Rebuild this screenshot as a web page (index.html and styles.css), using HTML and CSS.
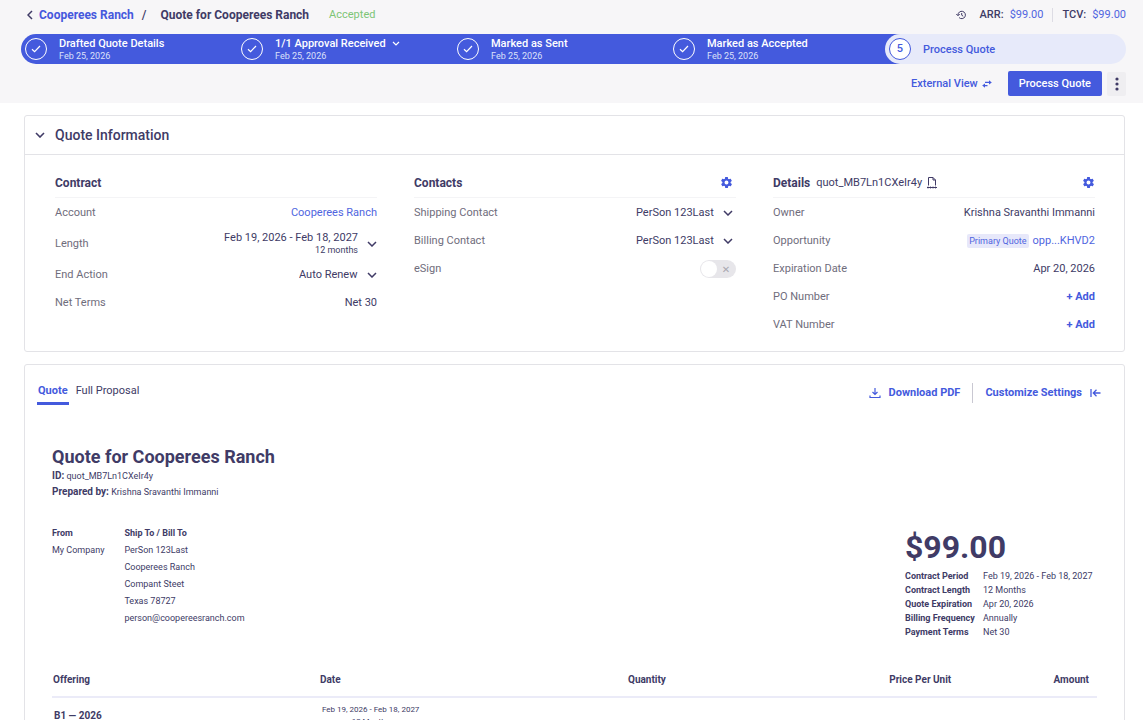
FILE: index.html
```html
<!DOCTYPE html>
<html lang="en">
<head>
    <meta charset="UTF-8">
    <meta name="viewport" content="width=device-width, initial-scale=1.0">
    <title>Quote for Cooperees Ranch</title>
    <link rel="stylesheet" href="styles.css">
</head>
<body>
    <header class="page-header">
        <div class="title-row">
            <nav class="breadcrumb">
                <svg class="back-icon" width="6" height="10" viewBox="0 0 6 10" fill="none" stroke="currentColor" stroke-width="1.5"><path d="M5 1 1 5l4 4"/></svg>
                <a href="#">Cooperees Ranch</a>
                <span class="slash">/</span>
                <h1>Quote for Cooperees Ranch</h1>
                <span class="quote-status">Accepted</span>
            </nav>
            <div class="totals">
                <svg class="history-icon" width="10" height="10" viewBox="0 0 10 10" fill="none" stroke="currentColor"><path d="M2 5a3.7 3.7 0 1 1 1.1 2.6M.3 4 2 5.8 3.7 4M5.7 3v2.2l1.5 1"/></svg>
                <span class="total"><b>ARR:</b> <a href="#">$99.00</a></span>
                <span class="total"><b>TCV:</b> <a href="#">$99.00</a></span>
            </div>
        </div>

        <div class="stepper">
            <div class="steps-done">
                <div class="step">
                    <span class="step-circle"><svg width="10" height="8" viewBox="0 0 10 8" fill="none" stroke="currentColor" stroke-width="1.2"><path d="m1 4.2 2.6 2.5L9 1"/></svg></span>
                    <div>
                        <p class="step-name">Drafted Quote Details</p>
                        <p class="step-date">Feb 25, 2026</p>
                    </div>
                </div>
                <div class="step">
                    <span class="step-circle"><svg width="10" height="8" viewBox="0 0 10 8" fill="none" stroke="currentColor" stroke-width="1.2"><path d="m1 4.2 2.6 2.5L9 1"/></svg></span>
                    <div>
                        <p class="step-name">1/1 Approval Received
                            <svg class="step-arrow" width="8" height="5" viewBox="0 0 8 5" fill="none" stroke="currentColor" stroke-width="1.2"><path d="m1 1 3 3 3-3"/></svg>
                        </p>
                        <p class="step-date">Feb 25, 2026</p>
                    </div>
                </div>
                <div class="step">
                    <span class="step-circle"><svg width="10" height="8" viewBox="0 0 10 8" fill="none" stroke="currentColor" stroke-width="1.2"><path d="m1 4.2 2.6 2.5L9 1"/></svg></span>
                    <div>
                        <p class="step-name">Marked as Sent</p>
                        <p class="step-date">Feb 25, 2026</p>
                    </div>
                </div>
                <div class="step">
                    <span class="step-circle"><svg width="10" height="8" viewBox="0 0 10 8" fill="none" stroke="currentColor" stroke-width="1.2"><path d="m1 4.2 2.6 2.5L9 1"/></svg></span>
                    <div>
                        <p class="step-name">Marked as Accepted</p>
                        <p class="step-date">Feb 25, 2026</p>
                    </div>
                </div>
            </div>
            <div class="step step-current">
                <span class="step-circle">5</span>
                <p class="step-name">Process Quote</p>
            </div>
        </div>

        <div class="actions">
            <button class="link-btn external-btn">External View
                <svg width="10" height="8" viewBox="0 0 10 8" fill="currentColor"><path d="M3 1.8h4V.2L9.8 2.4 7 4.6V3H3zM7 6.2H3v1.6L.2 5.6 3 3.4V5h2.5v1.2z"/></svg>
            </button>
            <button class="btn">Process Quote</button>
            <button class="more-btn" aria-label="More actions">
                <svg width="4" height="14" viewBox="0 0 4 14" fill="currentColor"><circle cx="2" cy="2" r="1.6"/><circle cx="2" cy="7" r="1.6"/><circle cx="2" cy="12" r="1.6"/></svg>
            </button>
        </div>
    </header>

    <main>
        <section class="card">
            <div class="card-header">
                <button class="icon-btn" aria-label="Collapse">
                    <svg width="10" height="6" viewBox="0 0 10 6" fill="none" stroke="currentColor" stroke-width="1.6"><path d="m1 1 4 4 4-4"/></svg>
                </button>
                <h2>Quote Information</h2>
            </div>
            <div class="info-grid">
                <div class="info-col">
                    <div class="info-title"><h3>Contract</h3></div>
                    <div class="info-row">
                        <span class="info-label">Account</span>
                        <a href="#">Cooperees Ranch</a>
                    </div>
                    <div class="info-row tall">
                        <span class="info-label">Length</span>
                        <button class="length-btn">
                            <span>Feb 19, 2026 - Feb 18, 2027<small>12 months</small></span>
                            <svg width="10" height="6" viewBox="0 0 10 6" fill="none" stroke="currentColor" stroke-width="1.5"><path d="m1 1 4 4 4-4"/></svg>
                        </button>
                    </div>
                    <div class="info-row">
                        <label class="info-label" for="endAction">End Action</label>
                        <div class="select-box">
                            <select id="endAction"><option>Auto Renew</option></select>
                            <svg width="10" height="6" viewBox="0 0 10 6" fill="none" stroke="currentColor" stroke-width="1.5"><path d="m1 1 4 4 4-4"/></svg>
                        </div>
                    </div>
                    <div class="info-row">
                        <span class="info-label">Net Terms</span>
                        <span>Net 30</span>
                    </div>
                </div>

                <div class="info-col">
                    <div class="info-title">
                        <h3>Contacts</h3>
                        <button class="icon-btn gear-btn contacts-gear" aria-label="Contact settings">
                            <svg width="11" height="11" viewBox="2 2 20 20" fill="currentColor"><path d="M19.4 13a7.5 7.5 0 0 0 0-2l2.1-1.6c.2-.2.2-.4.1-.6l-2-3.5c-.1-.2-.4-.3-.6-.2l-2.5 1a7.3 7.3 0 0 0-1.7-1L14.5 2.400c0-.2-.3-.4-.5-.4h-4c-.3 0-.5.2-.5.4l-.4 2.700c-.6.2-1.200.6-1.700 1l-2.500-1c-.2-.1-.5 0-.6.2l-2 3.500c-.1.2-.1.5.1.6L4.600 11a7.500 7.500 0 0 0 0 2l-2.100 1.600c-.2.2-.2.4-.1.6l2 3.500c.1.2.4.3.6.2l2.500-1c.5.4 1.100.7 1.700 1l.4 2.700c0 .2.2.4.5.4h4c.2 0 .5-.2.5-.4l.4-2.700c.6-.3 1.200-.6 1.700-1l2.500 1c.2.1.5 0 .6-.2l2-3.500c.1-.2.1-.5-.1-.6zM12 15.600a3.600 3.600 0 1 1 0-7.200 3.600 3.600 0 0 1 0 7.200z"/></svg>
                        </button>
                    </div>
                    <div class="info-row">
                        <label class="info-label" for="shipping">Shipping Contact</label>
                        <div class="select-box inset">
                            <select id="shipping"><option>PerSon 123Last</option></select>
                            <svg width="10" height="6" viewBox="0 0 10 6" fill="none" stroke="currentColor" stroke-width="1.5"><path d="m1 1 4 4 4-4"/></svg>
                        </div>
                    </div>
                    <div class="info-row">
                        <label class="info-label" for="billing">Billing Contact</label>
                        <div class="select-box inset">
                            <select id="billing"><option>PerSon 123Last</option></select>
                            <svg width="10" height="6" viewBox="0 0 10 6" fill="none" stroke="currentColor" stroke-width="1.5"><path d="m1 1 4 4 4-4"/></svg>
                        </div>
                    </div>
                    <div class="info-row">
                        <label class="info-label" for="esign">eSign</label>
                        <input type="checkbox" class="toggle" id="esign">
                    </div>
                </div>

                <div class="info-col">
                    <div class="info-title">
                        <h3>Details</h3>
                        <span class="quote-id">quot_MB7Ln1CXeIr4y</span>
                        <svg class="file-icon" width="10" height="12" viewBox="0 0 10 12" fill="none" stroke="currentColor"><path d="M1.5 8.500v-8h4.500l2.500 2.500v5.500M6 .5v2.500h2.500M0 10.500h10"/><path d="M1 9.500v2M3.500 9.500v2M6 9.500v2M8.500 9.500v2" stroke-width=".8"/></svg>
                        <button class="icon-btn gear-btn" aria-label="Detail settings">
                            <svg width="11" height="11" viewBox="2 2 20 20" fill="currentColor"><path d="M19.4 13a7.5 7.5 0 0 0 0-2l2.1-1.6c.2-.2.2-.4.1-.6l-2-3.5c-.1-.2-.4-.3-.6-.2l-2.5 1a7.3 7.3 0 0 0-1.7-1L14.5 2.400c0-.2-.3-.4-.5-.4h-4c-.3 0-.5.2-.5.4l-.4 2.700c-.6.2-1.200.6-1.700 1l-2.500-1c-.2-.1-.5 0-.6.2l-2 3.500c-.1.2-.1.5.1.6L4.600 11a7.500 7.500 0 0 0 0 2l-2.100 1.600c-.2.2-.2.4-.1.6l2 3.500c.1.2.4.3.6.2l2.500-1c.5.4 1.100.7 1.700 1l.4 2.700c0 .2.2.4.5.4h4c.2 0 .5-.2.5-.4l.4-2.700c.6-.3 1.200-.6 1.700-1l2.500 1c.2.1.5 0 .6-.2l2-3.500c.1-.2.1-.5-.1-.6zM12 15.600a3.600 3.600 0 1 1 0-7.200 3.600 3.600 0 0 1 0 7.200z"/></svg>
                        </button>
                    </div>
                    <div class="info-row">
                        <span class="info-label">Owner</span>
                        <span>Krishna Sravanthi Immanni</span>
                    </div>
                    <div class="info-row">
                        <span class="info-label">Opportunity</span>
                        <span class="opportunity"><span class="tag">Primary Quote</span><a href="#">opp...KHVD2</a></span>
                    </div>
                    <div class="info-row">
                        <span class="info-label">Expiration Date</span>
                        <span>Apr 20, 2026</span>
                    </div>
                    <div class="info-row">
                        <span class="info-label">PO Number</span>
                        <button class="link-btn">+ Add</button>
                    </div>
                    <div class="info-row">
                        <span class="info-label">VAT Number</span>
                        <button class="link-btn">+ Add</button>
                    </div>
                </div>
            </div>
        </section>

        <section class="card">
            <div class="toolbar">
                <div class="tabs" role="tablist">
                    <button class="tab active" role="tab" aria-selected="true">Quote</button>
                    <button class="tab" role="tab">Full Proposal</button>
                </div>
                <div class="toolbar-actions">
                    <button class="link-btn download-btn">
                        <svg width="12" height="12" viewBox="0 0 12 12" fill="none" stroke="currentColor" stroke-width="1.2"><path d="M6 1v6M3.5 5 6 7.500 8.500 5M1 8.500v2h10v-2"/></svg>
                        Download PDF
                    </button>
                    <button class="link-btn settings-btn">
                        Customize Settings
                        <svg width="11" height="10" viewBox="0 0 11 10" fill="none" stroke="currentColor" stroke-width="1.3"><path d="M1 1v8M10.500 5h-7M6.500 1.800 3.300 5l3.200 3.200"/></svg>
                    </button>
                </div>
            </div>

            <article class="document">
                <h2 class="doc-title">Quote for Cooperees Ranch</h2>
                <p class="doc-meta"><b>ID:</b> quot_MB7Ln1CXeIr4y</p>
                <p class="doc-meta"><b>Prepared by:</b> Krishna Sravanthi Immanni</p>

                <div class="doc-summary">
                    <div class="party">
                        <h4>From</h4>
                        <p>My Company</p>
                    </div>
                    <div class="party">
                        <h4>Ship To / Bill To</h4>
                        <p>PerSon 123Last</p>
                        <p>Cooperees Ranch</p>
                        <p>Compant Steet</p>
                        <p>Texas 78727</p>
                        <p>person@coopereesranch.com</p>
                    </div>
                    <div class="doc-total">
                        <p class="amount">$99.00</p>
                        <dl class="terms">
                            <dt>Contract Period</dt><dd>Feb 19, 2026 - Feb 18, 2027</dd>
                            <dt>Contract Length</dt><dd>12 Months</dd>
                            <dt>Quote Expiration</dt><dd>Apr 20, 2026</dd>
                            <dt>Billing Frequency</dt><dd>Annually</dd>
                            <dt>Payment Terms</dt><dd>Net 30</dd>
                        </dl>
                    </div>
                </div>

                <table class="offerings">
                    <thead>
                        <tr>
                            <th class="col-offering">Offering</th>
                            <th class="col-date">Date</th>
                            <th class="col-quantity">Quantity</th>
                            <th class="col-price">Price Per Unit</th>
                            <th class="col-amount">Amount</th>
                        </tr>
                    </thead>
                    <tbody>
                        <tr>
                            <td class="group-name">B1 — 2026</td>
                            <td colspan="4"><div class="period">Feb 19, 2026 - Feb 18, 2027<br>12 Months</div></td>
                        </tr>
                    </tbody>
                </table>
            </article>
        </section>
    </main>
</body>
</html>
```
FILE: styles.css
```css
* {
    margin: 0;
    padding: 0;
    box-sizing: border-box;
}

body {
    height: 100vh;
    overflow: hidden;
    background-color: #fff;
    color: #403b66;
    font-family: Roboto, Arial, sans-serif;
    font-size: 11px;
    line-height: 14px;
}

a {
    color: #5065e0;
    text-decoration: none;
}

button, select {
    border: none;
    background: none;
    color: inherit;
    font: inherit;
    cursor: pointer;
}

svg {
    flex-shrink: 0;
}

/* Header */

.page-header {
    background-color: #f7f6f8;
    padding: 0 17px 7px 21px;
}

.title-row {
    display: flex;
    justify-content: space-between;
    align-items: center;
    height: 30px;
    margin-bottom: 4px;
}

.breadcrumb {
    display: flex;
    align-items: center;
    padding-left: 6px;
    font-size: 12px;
}

.breadcrumb a {
    color: #4558dd;
    font-weight: 700;
    margin-left: 6px;
}

.slash {
    margin: 0 14px 0 8px;
    font-weight: 500;
}

.breadcrumb h1 {
    font-size: 12px;
    font-weight: 700;
}

.quote-status {
    margin-left: 20px;
    font-size: 11px;
    color: #7cc576;
}

.totals {
    display: flex;
    align-items: center;
}

.history-icon {
    margin-right: 14px;
}

.total {
    display: flex;
    gap: 6px;
}

.total b {
    font-weight: 500;
}

.total + .total {
    margin-left: 9px;
    padding-left: 9px;
    border-left: 1px solid #dddce4;
}

.stepper {
    display: flex;
    height: 30px;
}

.steps-done {
    flex: 1;
    display: flex;
    padding-right: 15px;
    background-color: #445add;
    border-radius: 15px 0 0 15px;
    color: #fff;
}

.step {
    flex: 1;
    display: flex;
    align-items: center;
    gap: 12px;
    padding-left: 4px;
}

.step-circle {
    display: flex;
    align-items: center;
    justify-content: center;
    width: 22px;
    height: 22px;
    border: 1px solid currentColor;
    border-radius: 50%;
}

.step-name {
    font-weight: 500;
    line-height: 13px;
}

.step-arrow {
    margin-left: 4px;
    vertical-align: middle;
}

.step-date {
    font-size: 9px;
    line-height: 12px;
    color: #dce0fa;
}

.step-current {
    flex: 0 0 241px;
    margin-left: -15px;
    background-color: #e7eafa;
    border-radius: 15px;
    color: #445add;
}

.step-current .step-circle {
    background-color: #fff;
    font-weight: 500;
}

.actions {
    display: flex;
    justify-content: flex-end;
    align-items: center;
    margin-top: 7px;
}

.link-btn {
    display: flex;
    align-items: center;
    color: #445add;
    font-weight: 700;
}

.external-btn {
    gap: 4px;
    margin-right: 16px;
    font-weight: 500;
}

.btn {
    height: 25px;
    padding: 0 11px;
    background-color: #445add;
    color: #fff;
    border-radius: 2px;
    font-weight: 500;
}

.more-btn {
    display: flex;
    align-items: center;
    justify-content: center;
    width: 19px;
    height: 24px;
    margin-left: 5px;
    background-color: #efeef1;
    border-radius: 2px;
}

/* Cards */

main {
    display: flex;
    flex-direction: column;
    gap: 12px;
    padding: 12px 18px 24px 24px;
}

.card {
    border: 1px solid #e3e3e7;
    border-radius: 3px;
}

.card-header {
    display: flex;
    align-items: center;
    gap: 10px;
    height: 39px;
    padding-left: 10px;
    border-bottom: 1px solid #e3e3e7;
}

.card-header h2 {
    font-size: 14px;
    font-weight: 500;
}

.icon-btn {
    display: flex;
}

.info-grid {
    display: grid;
    grid-template-columns: repeat(3, 1fr);
    gap: 37px;
    padding: 13px 29px 12px 30px;
}

.info-title {
    display: flex;
    align-items: center;
    height: 30px;
    margin-bottom: 1px;
    border-bottom: 1px solid #f4f4f6;
}

.info-title h3 {
    font-size: 12px;
    font-weight: 700;
}

.quote-id {
    margin: 0 5px 0 6px;
}

.gear-btn {
    margin-left: auto;
    padding-right: 1px;
    color: #445add;
}

.contacts-gear {
    padding-right: 4px;
}

.info-row {
    display: flex;
    justify-content: space-between;
    align-items: center;
    height: 28px;
}

.info-row.tall {
    height: 34px;
}

.info-label {
    color: #6f6d7c;
}

.length-btn {
    display: flex;
    align-items: center;
    gap: 9px;
    text-align: right;
    line-height: 12px;
}

.length-btn small {
    display: block;
    font-size: 9px;
}

.select-box {
    position: relative;
    display: flex;
    align-items: center;
}

.select-box.inset {
    margin-right: 3px;
}

.select-box select {
    appearance: none;
    padding-right: 19px;
}

.select-box svg {
    position: absolute;
    right: 0;
    pointer-events: none;
}

.toggle {
    appearance: none;
    display: flex;
    align-items: center;
    width: 36px;
    height: 18px;
    padding: 1px;
    background-color: #e7e6ea;
    border-radius: 9px;
    cursor: pointer;
}

.toggle::before {
    content: "";
    width: 16px;
    height: 16px;
    background-color: #fff;
    border-radius: 50%;
}

.toggle::after {
    content: "✕";
    flex: 1;
    color: #a9a8b0;
    font-family: "DejaVu Sans", sans-serif;
    font-size: 10px;
    text-align: center;
}

.opportunity {
    display: flex;
    align-items: center;
    gap: 4px;
}

.tag {
    padding: 0 2px;
    background-color: #e7e8fa;
    border-radius: 2px;
    color: #5065e0;
    font-size: 9px;
}

/* Quote document */

.toolbar {
    display: flex;
    justify-content: space-between;
    align-items: flex-start;
    padding: 18px 23px 0 12px;
}

.tabs {
    display: flex;
    gap: 6px;
}

.tab {
    height: 22px;
    padding: 1px 1px 4px;
    border-bottom: 3px solid transparent;
}

.tab.active {
    border-color: #445add;
    color: #445add;
    font-weight: 700;
}

.toolbar-actions {
    display: flex;
    align-items: center;
}

.download-btn {
    gap: 8px;
    height: 20px;
    padding-right: 12px;
    border-right: 1px solid #c9c8d2;
}

.settings-btn {
    gap: 8px;
    padding-left: 12px;
}

.document {
    padding: 41px 27px;
}

.doc-title {
    font-size: 18px;
    line-height: 22px;
    font-weight: 700;
}

.doc-meta {
    font-size: 9px;
    line-height: 16px;
}

.doc-meta b {
    font-size: 10px;
}

.doc-summary {
    display: flex;
    gap: 20px;
    margin-top: 25px;
}

.party {
    font-size: 9px;
    line-height: 17px;
}

.party h4 {
    font-weight: 700;
}

.doc-total {
    width: 192px;
    margin-left: auto;
}

.amount {
    font-size: 32px;
    line-height: 44px;
    font-weight: 700;
}

.terms {
    display: grid;
    grid-template-columns: 78px 1fr;
    font-size: 9px;
    line-height: 14px;
}

.terms dt {
    font-weight: 700;
}

.offerings {
    width: 100%;
    margin-top: 25px;
    border-collapse: collapse;
    table-layout: fixed;
}

.offerings th {
    height: 33px;
    border-bottom: 2px solid #ebebf8;
    font-size: 10px;
    font-weight: 700;
    text-align: left;
}

.offerings td {
    padding: 6px 2px;
    vertical-align: top;
}

.col-offering {
    width: 268px;
    padding-left: 1px;
}

.col-date {
    width: 308px;
}

.col-quantity {
    width: 25%;
}

.col-price {
    width: 12%;
}

.offerings .col-amount {
    padding-right: 8px;
    text-align: right;
}

.offerings .group-name {
    padding-top: 11px;
    font-size: 10px;
    font-weight: 700;
}

.period {
    width: fit-content;
    font-size: 8px;
    line-height: 12px;
    text-align: center;
}
```
